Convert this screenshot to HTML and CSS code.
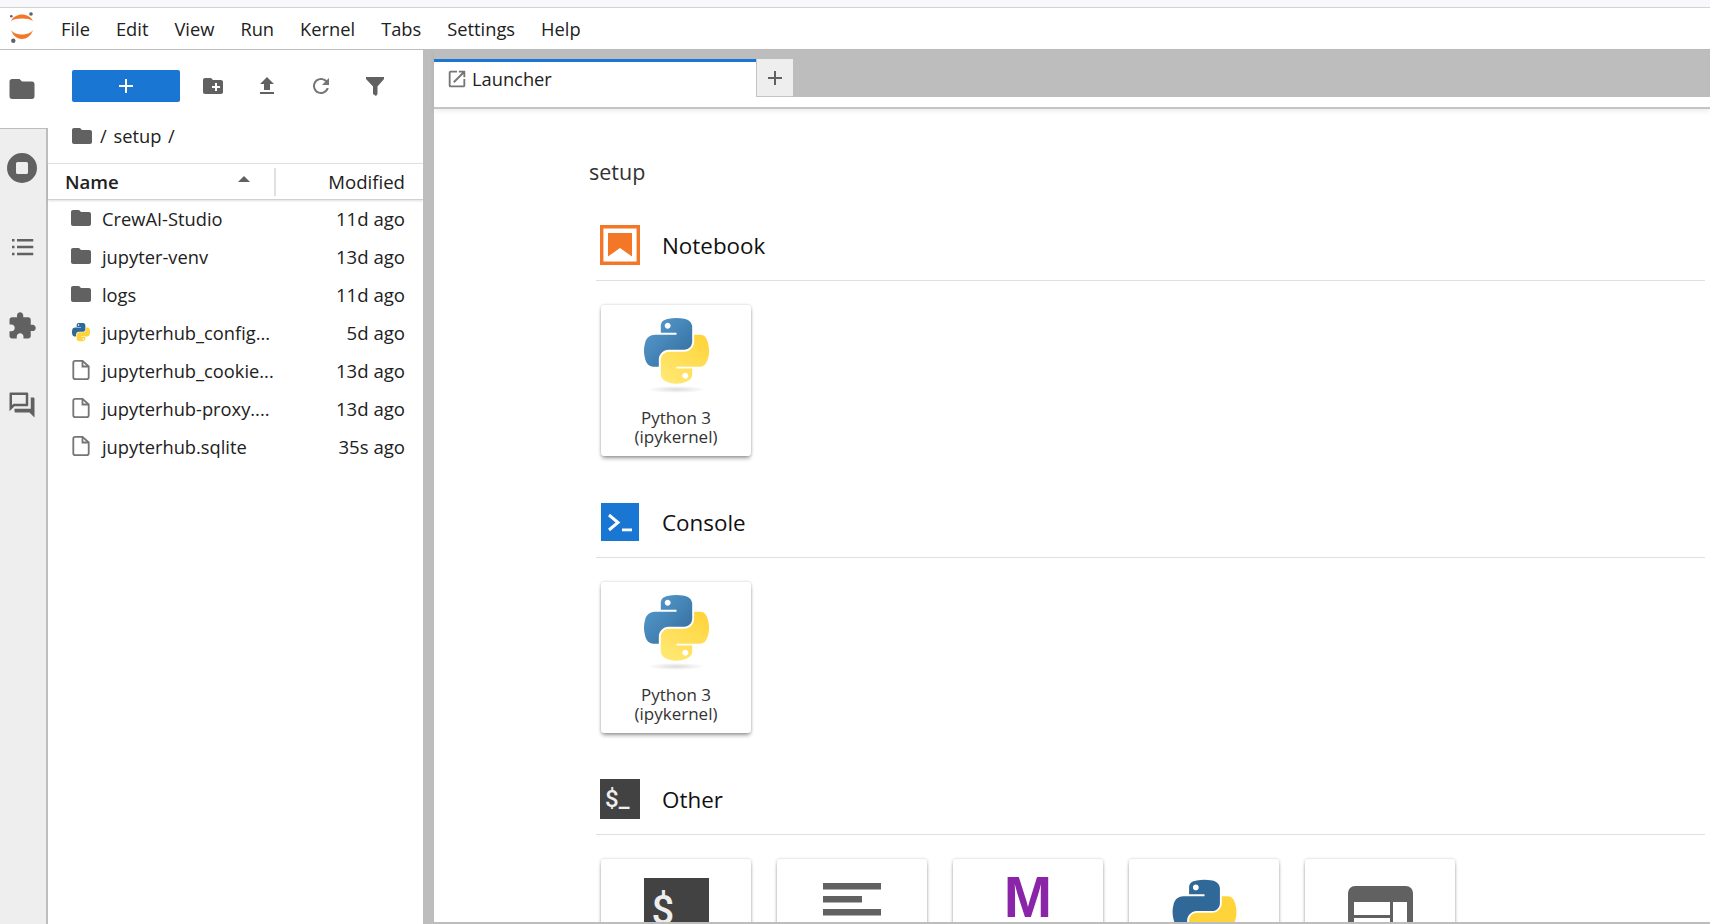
FILE: index.html
```html
<!DOCTYPE html>
<html lang="en">
<head>
  <meta charset="UTF-8">
  <title>JupyterLab</title>
  <link rel="stylesheet" href="styles.css">
</head>
<body>
  <svg class="defs" width="0" height="0">
    <defs>
      <linearGradient id="py-blue" x1="0" y1="0" x2="1" y2="1">
        <stop offset="0" stop-color="#5a9fd4"/>
        <stop offset="1" stop-color="#306998"/>
      </linearGradient>
      <linearGradient id="py-yellow" x1="0.2" y1="1" x2="0.8" y2="0">
        <stop offset="0" stop-color="#ffe873"/>
        <stop offset="1" stop-color="#ffd43b"/>
      </linearGradient>
      <radialGradient id="py-shadow">
        <stop offset="0" stop-color="#b8b8b8" stop-opacity=".5"/>
        <stop offset="1" stop-color="#b8b8b8" stop-opacity="0"/>
      </radialGradient>
      <path id="py-top" d="M54.9 0C50.3 0 46 .4 42.1 1.1 30.8 3.1 28.7 7.3 28.7 15v10.3h26.8v3.4H18.6c-7.8 0-14.6 4.7-16.7 13.6-2.5 10.2-2.6 16.6 0 27.2C3.8 77.4 8.3 83 16.1 83h9.2V70.8c0-8.8 7.6-16.6 16.8-16.6h26.8c7.5 0 13.4-6.2 13.4-13.6V15c0-7.3-6.1-12.7-13.4-13.9C64.3.3 59.5 0 54.9 0zM40.4 8.2c2.8 0 5.1 2.3 5.1 5.1s-2.3 5.1-5.1 5.1-5-2.3-5-5.1 2.2-5.1 5-5.1z"/>
      <path id="py-bottom" d="M85.6 28.7v11.8c0 9.2-7.8 17-16.7 17H42.1c-7.3 0-13.4 6.3-13.4 13.6v25.5c0 7.3 6.3 11.5 13.4 13.6 8.5 2.5 16.6 2.9 26.8 0 6.7-2 13.4-5.9 13.4-13.6V86.4H55.5V83h40.2c7.8 0 10.7-5.4 13.4-13.5 2.8-8.4 2.7-16.4 0-27.2-1.9-7.8-5.6-13.6-13.4-13.6zM70.6 93.3c2.8 0 5 2.3 5 5.1s-2.2 5.1-5 5.1-5.1-2.3-5.1-5.1 2.3-5.1 5.1-5.1z"/>
      <path id="folder" d="M10 4H4c-1.1 0-1.99.9-1.99 2L2 18c0 1.1.9 2 2 2h16c1.1 0 2-.9 2-2V8c0-1.1-.9-2-2-2h-8l-2-2z"/>
      <g id="file">
        <path d="M13.5 2.8H6.2A1.9 1.9 0 0 0 4.300 4.700v14.600a1.900 1.900 0 0 0 1.900 1.900h11.600a1.900 1.900 0 0 0 1.900-1.900V8.500z" fill="none" stroke="#757575" stroke-width="1.800"/>
        <path d="M13.500 2.800v5.700h5.700" fill="none" stroke="#757575" stroke-width="1.800"/>
      </g>
      <g id="python-logo">
        <use href="#py-top" fill="url(#py-blue)"/>
        <use href="#py-bottom" fill="url(#py-yellow)"/>
      </g>
    </defs>
  </svg>

  <div class="top-strip"></div>

  <header class="menubar">
    <svg class="logo" viewBox="0 0 24 31" width="24" height="31">
      <path d="M1 8C5-.7 19-.7 23 8 19 4.700 5 4.700 1 8z" fill="#f37726"/>
      <path d="M1 17C5 29 19 29 23 17 19 23 5 23 1 17z" fill="#f37726"/>
      <circle cx="1.300" cy="3.300" r="1.300" fill="#616161"/>
      <circle cx="21" cy="1" r="1.800" fill="#616161"/>
      <circle cx="3.300" cy="27.700" r="2.200" fill="#616161"/>
    </svg>
    <nav class="menu">
      <span>File</span>
      <span>Edit</span>
      <span>View</span>
      <span>Run</span>
      <span>Kernel</span>
      <span>Tabs</span>
      <span>Settings</span>
      <span>Help</span>
    </nav>
  </header>

  <div class="workspace">
    <aside class="activity">
      <div class="activity-tab active">
        <svg viewBox="0 0 24 24" width="30" height="30"><use href="#folder" fill="#616161"/></svg>
      </div>
      <div class="activity-tab">
        <svg viewBox="0 0 24 24" width="36" height="36"><path fill="#616161" fill-rule="evenodd" d="M12 2a10 10 0 1 0 0 20 10 10 0 0 0 0-20zM9 8h6a1 1 0 0 1 1 1v6a1 1 0 0 1-1 1H9a1 1 0 0 1-1-1V9a1 1 0 0 1 1-1z"/></svg>
      </div>
      <div class="activity-tab">
        <svg viewBox="0 0 24 24" width="30" height="30"><path fill="#616161" d="M4 5.500h2v2H4zM8 5.500h13v2H8zM4 11h2v2H4zM8 11h13v2H8zM4 16.500h2v2H4zM8 16.500h13v2H8z"/></svg>
      </div>
      <div class="activity-tab">
        <svg viewBox="0 0 24 24" width="30" height="30"><path fill="#616161" d="M20.500 11H19V7c0-1.100-.9-2-2-2h-4V3.500C13 2.120 11.880 1 10.500 1S8 2.120 8 3.500V5H4c-1.100 0-1.990.9-1.990 2v3.800H3.500c1.490 0 2.700 1.210 2.700 2.700s-1.210 2.700-2.700 2.700H2V20c0 1.100.9 2 2 2h3.800v-1.500c0-1.490 1.210-2.700 2.700-2.700 1.490 0 2.700 1.210 2.700 2.700V22H17c1.100 0 2-.9 2-2v-4h1.500c1.380 0 2.500-1.120 2.500-2.500S21.880 11 20.500 11z"/></svg>
      </div>
      <div class="activity-tab">
        <svg viewBox="0 0 24 24" width="30" height="30"><path fill="#616161" d="M15 4v7H5.170L4 12.170V4h11m1-2H3c-.55 0-1 .45-1 1v14l4-4h10c.55 0 1-.45 1-1V3c0-.55-.45-1-1-1zm5 4h-2v9H6v2c0 .55.45 1 1 1h11l4 4V7c0-.55-.45-1-1-1z"/></svg>
      </div>
    </aside>

    <section class="filebrowser">
      <div class="fb-toolbar">
        <button class="new-btn">
          <svg viewBox="0 0 24 24" width="24" height="24"><path fill="#fff" d="M11 5h2v6h6v2h-6v6h-2v-6H5v-2h6z"/></svg>
        </button>
        <span class="fb-tool"><svg viewBox="0 0 24 24" width="24" height="24"><path fill="#616161" d="M20 6h-8l-2-2H4c-1.110 0-1.990.89-1.990 2L2 18c0 1.110.89 2 2 2h16c1.110 0 2-.89 2-2V8c0-1.110-.89-2-2-2zm-1 8h-3v3h-2v-3h-3v-2h3V9h2v3h3v2z"/></svg></span>
        <span class="fb-tool"><svg viewBox="0 0 24 24" width="24" height="24"><path fill="#616161" d="M9 16h6v-6h4l-7-7-7 7h4zm-4 2h14v2H5z"/></svg></span>
        <span class="fb-tool"><svg viewBox="0 0 24 24" width="24" height="24"><path fill="#757575" d="M17.650 6.350C16.200 4.900 14.210 4 12 4c-4.420 0-7.990 3.580-7.990 8s3.570 8 7.990 8c3.730 0 6.840-2.550 7.730-6h-2.080c-.82 2.330-3.040 4-5.650 4-3.310 0-6-2.690-6-6s2.690-6 6-6c1.660 0 3.140.69 4.220 1.780L13 11h7V4l-2.350 2.350z"/></svg></span>
        <span class="fb-tool"><svg viewBox="0 0 24 24" width="24" height="24"><path fill="#616161" d="M3 3h18v2l-6.500 7.500V20l-1.500 2-3-2v-7.500L3 5z"/></svg></span>
      </div>

      <div class="crumbs">
        <svg viewBox="0 0 24 24" width="24" height="24"><use href="#folder" fill="#616161"/></svg>
        <span>/ setup /</span>
      </div>

      <div class="fb-header">
        <div class="col-name">
          <span>Name</span>
          <svg class="caret" viewBox="0 0 12 6" width="12" height="6"><path fill="#616161" d="M0 6l6-6 6 6z"/></svg>
        </div>
        <div class="col-modified">Modified</div>
      </div>

      <ul class="files">
        <li><svg viewBox="0 0 24 24" width="24" height="24"><use href="#folder" fill="#616161"/></svg><span class="fname">CrewAI-Studio</span><span class="fdate">11d ago</span></li>
        <li><svg viewBox="0 0 24 24" width="24" height="24"><use href="#folder" fill="#616161"/></svg><span class="fname">jupyter-venv</span><span class="fdate">13d ago</span></li>
        <li><svg viewBox="0 0 24 24" width="24" height="24"><use href="#folder" fill="#616161"/></svg><span class="fname">logs</span><span class="fdate">11d ago</span></li>
        <li><svg viewBox="-18 -18 147 147" width="24" height="24"><use href="#py-top" fill="#306998"/><use href="#py-bottom" fill="#ffd43b"/></svg><span class="fname">jupyterhub_config...</span><span class="fdate">5d ago</span></li>
        <li><svg viewBox="0 0 24 24" width="24" height="24"><use href="#file"/></svg><span class="fname">jupyterhub_cookie...</span><span class="fdate">13d ago</span></li>
        <li><svg viewBox="0 0 24 24" width="24" height="24"><use href="#file"/></svg><span class="fname">jupyterhub-proxy....</span><span class="fdate">13d ago</span></li>
        <li><svg viewBox="0 0 24 24" width="24" height="24"><use href="#file"/></svg><span class="fname">jupyterhub.sqlite</span><span class="fdate">35s ago</span></li>
      </ul>
    </section>

    <div class="splitter"></div>

    <main class="main">
      <div class="tabbar">
        <div class="tab">
          <svg viewBox="0 0 24 24" width="22" height="22"><path fill="#757575" d="M19 19H5V5h7V3H5a2 2 0 0 0-2 2v14a2 2 0 0 0 2 2h14c1.100 0 2-.9 2-2v-7h-2v7zM14 3v2h3.590l-9.830 9.830 1.410 1.410L19 6.410V10h2V3h-7z"/></svg>
          <span>Launcher</span>
        </div>
        <div class="add-tab">
          <svg viewBox="0 0 24 24" width="24" height="24"><path fill="#616161" d="M11 5h2v6h6v2h-6v6h-2v-6H5v-2h6z"/></svg>
        </div>
      </div>

      <div class="launcher">
        <h1 class="cwd">setup</h1>

        <div class="section-head">
          <span class="section-icon">
            <svg viewBox="0 0 40 40" width="40" height="40">
              <path fill="none" stroke="#f37726" stroke-width="3.400" d="M1.700 1.700h36.600v36.600H1.700z"/>
              <path fill="#f37726" d="M8 8h24v23.500L20 23 8 31.500z"/>
            </svg>
          </span>
          <h2>Notebook</h2>
        </div>
        <div class="cards">
          <div class="card">
            <svg class="card-icon" viewBox="0 0 111 128" width="65" height="75">
              <use href="#python-logo"/>
              <ellipse cx="55" cy="122" rx="50" ry="6" fill="url(#py-shadow)"/>
            </svg>
            <div class="card-label">Python 3<br>(ipykernel)</div>
          </div>
        </div>

        <div class="section-head">
          <span class="section-icon">
            <span class="console-icon">
              <svg viewBox="0 0 38 38" width="38" height="38">
                <path fill="none" stroke="#fff" stroke-width="3" d="M8 12l9 7.500-9 7.500"/>
                <path fill="#fff" d="M21 25.500h10v2.800H21z"/>
              </svg>
            </span>
          </span>
          <h2>Console</h2>
        </div>
        <div class="cards">
          <div class="card">
            <svg class="card-icon" viewBox="0 0 111 128" width="65" height="75">
              <use href="#python-logo"/>
              <ellipse cx="55" cy="122" rx="50" ry="6" fill="url(#py-shadow)"/>
            </svg>
            <div class="card-label">Python 3<br>(ipykernel)</div>
          </div>
        </div>

        <div class="section-head">
          <span class="section-icon"><span class="term-icon">$_</span></span>
          <h2>Other</h2>
        </div>
        <div class="cards">
          <div class="card">
            <span class="term-big">$_</span>
          </div>
          <div class="card">
            <svg class="text-lines" viewBox="0 0 58 60" width="58" height="60">
              <path fill="#616161" d="M0 0h58v6.500H0zM0 13h39v6.500H0zM0 26h58v6.500H0zM0 39h39v6.500H0z"/>
            </svg>
          </div>
          <div class="card">
            <span class="md-icon">M</span>
          </div>
          <div class="card">
            <svg class="py-flat" viewBox="-1 -1 113 114" width="65" height="66">
              <use href="#py-top" fill="#306998"/>
              <use href="#py-bottom" fill="#ffd43b"/>
            </svg>
          </div>
          <div class="card">
            <svg class="table-icon" viewBox="0 0 65 65" width="65" height="65">
              <path fill="#616161" fill-rule="evenodd" d="M7 0h51a7 7 0 0 1 7 7v58H0V7a7 7 0 0 1 7-7zM6 16v13h36V16zM45 16v49h14V16zM6 32v33h36V32z"/>
            </svg>
          </div>
        </div>
      </div>
    </main>
  </div>
</body>
</html>
```

FILE: styles.css
```css
* {
  box-sizing: border-box;
}

html,
body {
  margin: 0;
  height: 100%;
}

body {
  display: flex;
  flex-direction: column;
  height: 924px;
  overflow: hidden;
  font-family: "Open Sans", "Noto Sans", sans-serif;
  font-size: 18.3px;
  color: #212121;
  background: #fff;
}

.defs {
  position: absolute;
}

.top-strip {
  height: 8px;
  background: #f8f8fa;
  border-bottom: 1px solid #d3d3d6;
  flex: none;
}

.menubar {
  display: flex;
  align-items: center;
  height: 41px;
  flex: none;
  background: #fff;
}

.logo {
  margin-left: 10px;
  overflow: visible;
}

.menu {
  display: flex;
  margin-left: 14px;
}

.menu span {
  padding: 0 13px;
}

.workspace {
  display: flex;
  flex: 1;
  min-height: 0;
  border-top: 1px solid #bdbdbd;
}

/* left icon strip */
.activity {
  width: 48px;
  flex: none;
  background: #eee;
  border-right: 2px solid #bdbdbd;
}

.activity-tab {
  display: flex;
  align-items: center;
  justify-content: center;
  height: 79px;
  width: 46px;
  padding: 0 2px 2px 0;
}

.activity-tab.active {
  background: #fff;
  width: 48px;
  padding: 0 4px 0 0;
  border-bottom: 1px solid #bdbdbd;
}

/* file browser */
.filebrowser {
  width: 375px;
  flex: none;
  background: #fff;
  display: flex;
  flex-direction: column;
}

.fb-toolbar {
  display: flex;
  align-items: center;
  height: 72px;
  padding-left: 24px;
}

.new-btn {
  display: flex;
  align-items: center;
  justify-content: center;
  width: 108px;
  height: 32px;
  margin-right: 6px;
  border: 0;
  border-radius: 2px;
  background: #1976d2;
  padding: 0;
}

.fb-tool {
  display: flex;
  justify-content: center;
  width: 54px;
}

.crumbs {
  display: flex;
  align-items: center;
  gap: 6px;
  height: 41px;
  padding: 0 0 14px 22px;
  word-spacing: 2px;
}

.fb-header {
  display: flex;
  align-items: center;
  height: 37px;
  border-top: 1px solid #e0e0e0;
  border-bottom: 1px solid #d0d0d0;
  box-shadow: 0 1px 2px rgba(0, 0, 0, .12);
  font-size: 18.6px;
}

.col-name {
  display: flex;
  align-items: center;
  justify-content: space-between;
  width: 228px;
  height: 28px;
  padding: 0 24px 0 17px;
  border-right: 2px solid #e0e0e0;
  font-weight: 600;
}

.caret {
  margin-top: -5px;
}

.col-modified {
  flex: 1;
  text-align: right;
  padding-right: 18px;
}

.files {
  list-style: none;
  margin: 0;
  padding: 0;
}

.files li {
  display: flex;
  align-items: center;
  height: 38px;
  padding: 0 18px 2px 21px;
}

.fname {
  flex: 1;
  margin-left: 9px;
  white-space: nowrap;
}

.fdate {
  font-size: 18.6px;
  white-space: nowrap;
}

.splitter {
  width: 11px;
  flex: none;
  background: #bdbdbd;
}

/* main area */
.main {
  flex: 1;
  min-width: 0;
  display: flex;
  flex-direction: column;
  border-bottom: 2px solid #bdbdbd;
}

.tabbar {
  display: flex;
  align-items: flex-start;
  flex: none;
  height: 59px;
  padding-top: 9px;
  background: linear-gradient(#bdbdbd 47px, #fff 47px);
  border-bottom: 2px solid #c4c4c4;
  box-shadow: 0 2px 5px rgba(0, 0, 0, .08);
  position: relative;
}

.tab {
  display: flex;
  align-items: center;
  gap: 4px;
  width: 322px;
  height: 48px;
  padding: 0 0 12px 12px;
  background: #fff;
  border-top: 3px solid #1976d2;
}

.add-tab {
  display: flex;
  align-items: center;
  justify-content: center;
  width: 37px;
  height: 38px;
  background: #eee;
  border-left: 1px solid #c4c4c4;
  border-bottom: 1px solid #c4c4c4;
}

.launcher {
  flex: 1;
  min-height: 0;
  overflow: hidden;
  padding: 0 5px 0 162px;
}

.cwd {
  margin: 49px 0 0 -7px;
  font-size: 21.500px;
  font-weight: 400;
  line-height: 28px;
  color: #333;
}

.section-head {
  display: flex;
  align-items: center;
  height: 56px;
  margin-top: 39px;
  padding: 0 0 15px 4px;
  border-bottom: 1px solid #e0e0e0;
  color: #111;
}

.cards + .section-head {
  margin-top: 46px;
}

.section-head h2 {
  margin: 0 0 0 22px;
  font-size: 22.400px;
  font-weight: 400;
}

.section-icon {
  display: flex;
  align-items: center;
  justify-content: center;
  width: 40px;
  height: 40px;
}

.console-icon {
  display: flex;
  width: 38px;
  height: 38px;
  background: #1976d2;
}

.term-icon {
  display: block;
  width: 40px;
  height: 40px;
  padding-left: 5px;
  background: #424242;
  color: #eee;
  font-family: Roboto, sans-serif;
  font-weight: 500;
  font-size: 24px;
  line-height: 40px;
}

.cards {
  display: flex;
  gap: 26px;
  padding: 24px 0 0 5px;
}

.card {
  display: flex;
  flex-direction: column;
  align-items: center;
  width: 150px;
  height: 151px;
  flex: none;
  background: #fff;
  border-radius: 3px;
  box-shadow: 0 3px 4px -1px rgba(0, 0, 0, .4), 0 0 3px rgba(0, 0, 0, .2);
}

.card-icon {
  flex: none;
  margin-top: 13px;
}

.card-label {
  margin-top: 15px;
  font-size: 17px;
  line-height: 19px;
  text-align: center;
  color: #333;
}

.term-big {
  display: block;
  width: 65px;
  height: 65px;
  margin-top: 19px;
  padding-left: 8px;
  background: #424242;
  color: #eee;
  font-family: Roboto, sans-serif;
  font-weight: 500;
  font-size: 40px;
  line-height: 65px;
}

.text-lines {
  margin-top: 24px;
}

.md-icon {
  margin-top: -2px;
  font-family: "Liberation Sans", sans-serif;
  font-size: 58px;
  line-height: 80px;
  font-weight: 700;
  color: #8a24a8;
}

.py-flat {
  margin-top: 20px;
}

.table-icon {
  margin-top: 27px;
}
```
